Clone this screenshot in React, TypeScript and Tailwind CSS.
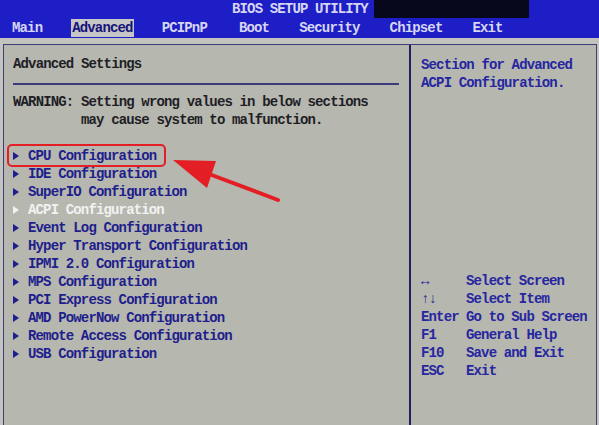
const menu = [
  { label: "Main", ml: "ml-[12px]" },
  { label: "Advanced", ml: "ml-[29px]", active: true },
  { label: "PCIPnP", ml: "ml-[28px]" },
  { label: "Boot", ml: "ml-[32px]" },
  { label: "Security", ml: "ml-[30px]" },
  { label: "Chipset", ml: "ml-[30px]" },
  { label: "Exit", ml: "ml-[30px]" },
];

const items = [
  "CPU Configuration",
  "IDE Configuration",
  "SuperIO Configuration",
  "ACPI Configuration",
  "Event Log Configuration",
  "Hyper Transport Configuration",
  "IPMI 2.0 Configuration",
  "MPS Configuration",
  "PCI Express Configuration",
  "AMD PowerNow Configuration",
  "Remote Access Configuration",
  "USB Configuration",
];

const keys = [
  ["↔", "Select Screen"],
  ["↑↓", "Select Item"],
  ["Enter", "Go to Sub Screen"],
  ["F1", "General Help"],
  ["F10", "Save and Exit"],
  ["ESC", "Exit"],
];

function Marker({ white }: { white?: boolean }) {
  return (
    <span className="inline-flex w-[15px] items-center">
      <svg width="6" height="8" viewBox="0 0 6 8">
        <polygon points="0,0 6,4 0,8" fill={white ? "#f2f2f2" : "#1e1e8c"} />
      </svg>
    </span>
  );
}

export default function App() {
  return (
    <div
      className="relative flex h-[425px] w-[599px] flex-col overflow-hidden bg-[#c3c4bd] text-[14px] font-bold leading-[18px] tracking-[-0.85px]"
      style={{ fontFamily: '"Liberation Mono", "DejaVu Sans Mono", monospace' }}
    >
      <header className="bg-[#1e1ec6] text-[#d6d6f2]">
        <div className="flex h-[18px] items-center">
          <span className="ml-[232px]">BIOS SETUP UTILITY</span>
          <span className="ml-[6px] h-full w-[155px] bg-[#08081c]" />
        </div>
        <nav className="flex h-[20px] items-center">
          {menu.map((m) =>
            m.active ? (
              <span key={m.label} className={`${m.ml} bg-[#c6c6c6] px-[1px] text-[#15157a]`}>
                {m.label}
              </span>
            ) : (
              <span key={m.label} className={m.ml}>
                {m.label}
              </span>
            )
          )}
        </nav>
      </header>

      <div className="ml-[3px] mr-[2px] mt-[6px] flex flex-1 border-l border-r border-t border-[#3d3d78] bg-[#b6b7af]">
        <section className="w-[407px] shrink-0 border-r-2 border-[#202060] pl-[9px] pr-[10px] pt-[10px]">
          <div className="text-[#1e1e26]">Advanced Settings</div>
          <div className="mt-[10px] h-[2px] bg-[#3a3a78]" />
          <div className="mt-[8px] whitespace-pre text-[#1e1e26]">
            {"WARNING: Setting wrong values in below sections\n         may cause system to malfunction."}
          </div>
          <ul className="mt-[18px]">
            {items.map((it, i) => (
              <li key={it} className={i === 3 ? "flex text-[#f2f2f2]" : "flex text-[#1e1e8c]"}>
                <Marker white={i === 3} />
                <span>{it}</span>
              </li>
            ))}
          </ul>
        </section>

        <aside className="flex flex-1 flex-col pl-[10px] pt-[11px] text-[#2626a0]">
          <div>Section for Advanced</div>
          <div>ACPI Configuration.</div>
          <div className="mt-[180px] grid grid-cols-[45px_1fr]">
            {keys.map(([k, d]) => (
              <div key={k} className="contents">
                <span>{k}</span>
                <span>{d}</span>
              </div>
            ))}
          </div>
        </aside>
      </div>

      <div className="pointer-events-none absolute left-[7px] top-[144px] h-[23px] w-[159px] rounded-[5px] border-[2.5px] border-[#e41e25]" />
      <svg className="pointer-events-none absolute left-0 top-0" width="599" height="425">
        <line x1="209" y1="174" x2="278" y2="200" stroke="#e41e25" strokeWidth="4" strokeLinecap="round" />
        <polygon points="173,160 216,161 207,188" fill="#e41e25" />
      </svg>
    </div>
  );
}
